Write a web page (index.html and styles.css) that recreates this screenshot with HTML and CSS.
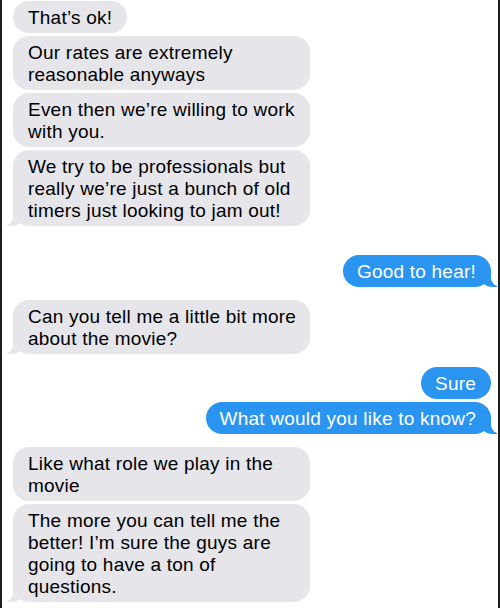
FILE: index.html
```html
<!DOCTYPE html>
<html>
<head>
<meta charset="utf-8">
<link rel="stylesheet" href="styles.css">
</head>
<body>
<div class="thread">
  <div class="group in first">
    <div class="bubble">That’s ok!</div>
    <div class="bubble wide">Our rates are extremely<br>reasonable anyways</div>
    <div class="bubble wide">Even then we’re willing to work<br>with you.</div>
    <div class="bubble wide tail">We try to be professionals but<br>really we’re just a bunch of old<br>timers just looking to jam out!</div>
  </div>
  <div class="group out gap-big">
    <div class="bubble tail">Good to hear!</div>
  </div>
  <div class="group in">
    <div class="bubble wide tail">Can you tell me a little bit more<br>about the movie?</div>
  </div>
  <div class="group out">
    <div class="bubble">Sure</div>
    <div class="bubble tail">What would you like to know?</div>
  </div>
  <div class="group in">
    <div class="bubble wide">Like what role we play in the<br>movie</div>
    <div class="bubble wide tail">The more you can tell me the<br>better! I’m sure the guys are<br>going to have a ton of<br>questions.</div>
  </div>
</div>
</body>
</html>
```
FILE: styles.css
```css
html, body {
  margin: 0;
  padding: 0;
  background: #ffffff;
}
body {
  height: 608px;
  overflow: hidden;
  border-left: 2px solid #1c1c1c;
  border-right: 2px solid #1c1c1c;
  box-sizing: border-box;
  font-family: "Liberation Sans", Arial, sans-serif;
  font-size: 19px;
  line-height: 22px;
  letter-spacing: 0.22px;
}
.thread {
  display: flex;
  flex-direction: column;
  padding: 1px 7px 0 11px;
}
.group {
  display: flex;
  flex-direction: column;
  gap: 3px;
  margin-top: 13px;
}
.group.first { margin-top: 0; }
.group.gap-big { margin-top: 29px; }
.group.in { align-items: flex-start; }
.group.out { align-items: flex-end; }
.bubble {
  position: relative;
  white-space: nowrap;
  padding: 6px 15px 4px 15px;
  border-radius: 16px;
}
.in .bubble {
  background: #e5e5ea;
  color: #000;
}
.out .bubble {
  background: #2a95f0;
  color: #fff;
  padding: 6px 15px 4px 14px;
}
.bubble.wide {
  width: 297px;
  box-sizing: border-box;
}
.in .bubble.tail::before {
  content: "";
  position: absolute;
  bottom: 0;
  left: -6px;
  width: 18px;
  height: 16px;
  background: #e5e5ea;
  border-bottom-right-radius: 14px 12px;
}
.in .bubble.tail::after {
  content: "";
  position: absolute;
  bottom: 0;
  left: -10px;
  width: 10px;
  height: 17px;
  background: #fff;
  border-bottom-right-radius: 10px 9px;
}
.out .bubble.tail::before {
  content: "";
  position: absolute;
  bottom: 0;
  right: -6px;
  width: 18px;
  height: 16px;
  background: #2a95f0;
  border-bottom-left-radius: 14px 12px;
}
.out .bubble.tail::after {
  content: "";
  position: absolute;
  bottom: 0;
  right: -10px;
  width: 10px;
  height: 17px;
  background: #fff;
  border-bottom-left-radius: 10px 9px;
}
```
